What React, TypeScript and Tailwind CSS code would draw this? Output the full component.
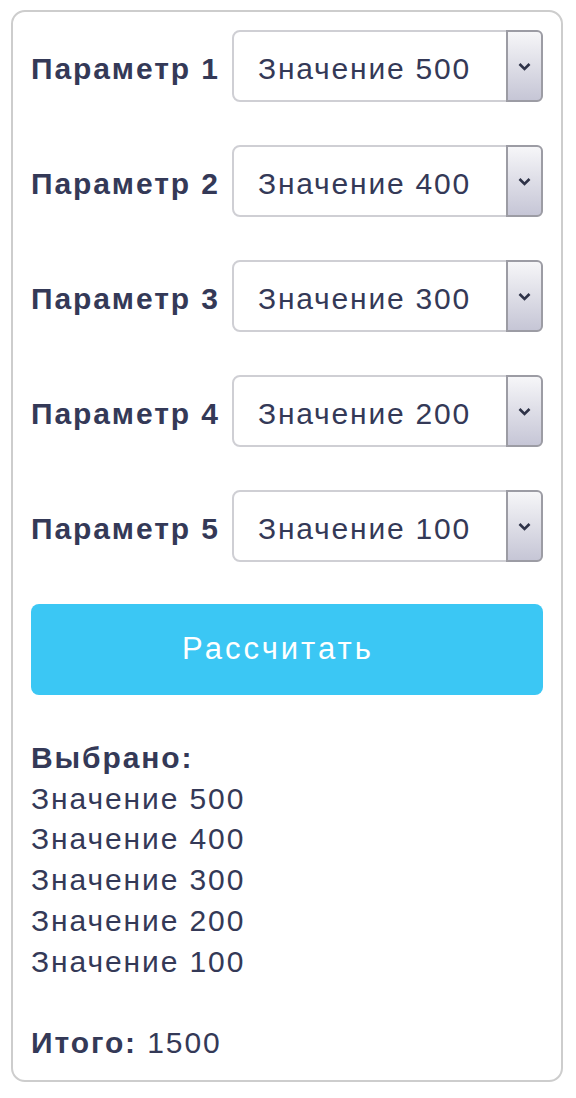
const params = [
  { label: 'Параметр 1', value: 'Значение 500' },
  { label: 'Параметр 2', value: 'Значение 400' },
  { label: 'Параметр 3', value: 'Значение 300' },
  { label: 'Параметр 4', value: 'Значение 200' },
  { label: 'Параметр 5', value: 'Значение 100' },
];

function FakeSelect({ value }: { value: string }) {
  return (
    <div className="flex h-[72px] flex-1 items-stretch rounded-[8px] border-2 border-[#cfcfd4] bg-white">
      <div className="flex flex-1 items-center pl-[24px] pt-[5px] text-[30px] tracking-[1.8px] text-[#343957]">{value}</div>
      <div className="-m-[2px] flex w-[37px] items-center justify-center rounded-r-[6px] border-2 border-[#9c9ca4] bg-gradient-to-b from-[#f6f6f8] to-[#c6c6d6]">
        <svg width="13" height="9" viewBox="0 0 13 9">
          <path d="M1.5 2 L6.5 7 L11.5 2" fill="none" stroke="#2f3348" strokeWidth="2.6" />
        </svg>
      </div>
    </div>
  );
}

export default function App() {
  return (
    <div className="bg-white pl-[11px] pt-[10px]" style={{ fontFamily: '"Liberation Sans", Arial, sans-serif' }}>
      <div className="h-[1072px] w-[552px] rounded-[14px] border-2 border-[#cdcdcd] px-[18px] pt-[18px]">
        <div className="flex flex-col gap-[43px]">
          {params.map((p) => (
            <div key={p.label} className="flex items-center">
              <span className="w-[201px] whitespace-nowrap pt-[5px] text-[30px] font-bold tracking-[1.9px] text-[#343957]">{p.label}</span>
              <FakeSelect value={p.value} />
            </div>
          ))}
        </div>
        <button className="mt-[42px] flex h-[91px] w-full items-center justify-center rounded-[8px] bg-[#3bc7f4] pr-[18px] text-[31px] tracking-[3px] text-white">
          Рассчитать
        </button>
        <div className="mt-[43px] text-[30px] leading-[40.7px] tracking-[1.9px] text-[#343957]">
          <div className="font-bold">Выбрано:</div>
          {params.map((p) => (
            <div key={p.value}>{p.value}</div>
          ))}
          <div className="h-[40.7px]" />
          <div>
            <span className="font-bold">Итого:</span> 1500
          </div>
        </div>
      </div>
    </div>
  );
}
